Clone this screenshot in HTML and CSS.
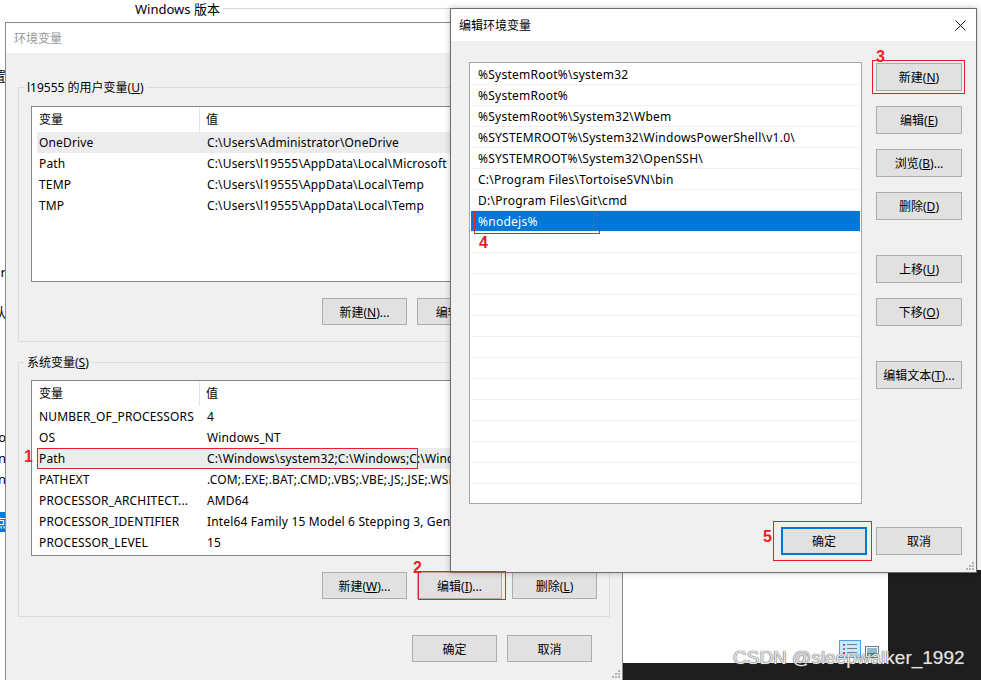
FILE: index.html
```html
<!DOCTYPE html>
<html lang="zh-CN">
<head>
    <meta charset="UTF-8">
    <meta name="viewport" content="width=device-width, initial-scale=1.0">
    <title>编辑环境变量</title>
    <link rel="stylesheet" href="styles.css">
</head>
<body>
    <div class="desktop">
        <div class="back-top">
            <span>Windows 版本</span>
            <div class="back-rule"></div>
        </div>

        <div class="back-left">
            <div class="bl-inner">
                <div class="bl-item bl-1">设置</div>
                <div class="bl-item bl-2">Jar</div>
                <div class="bl-item bl-3">认</div>
                <div class="bl-item bl-4">Pro</div>
                <div class="bl-item bl-5">Min</div>
                <div class="bl-item bl-5">Min</div>
                <div class="bl-item bl-6"><span class="bl-blue">点</span></div>
            </div>
        </div>

        <div class="back-app">
            <div class="back-sheet">
                <svg class="view-icon" width="22" height="18" viewBox="0 0 22 18">
                    <rect x="0.5" y="0.5" width="21" height="17" fill="#cce8ff" stroke="#4aa3e8"/>
                    <rect x="4" y="4" width="2" height="2" fill="#7a7a7a"/>
                    <rect x="8" y="4" width="10" height="1" fill="#7a7a7a"/>
                    <rect x="4" y="8" width="2" height="2" fill="#7a7a7a"/>
                    <rect x="8" y="8" width="10" height="1" fill="#7a7a7a"/>
                    <rect x="4" y="12" width="2" height="2" fill="#d04040"/>
                    <rect x="8" y="12" width="10" height="1" fill="#7a7a7a"/>
                </svg>
                <svg class="view-icon" width="14" height="12" viewBox="0 0 14 12">
                    <rect x="0.5" y="0.5" width="13" height="11" fill="#fff" stroke="#7a7a7a"/>
                    <rect x="2" y="2" width="10" height="5" fill="#8fb7d8"/>
                    <rect x="2" y="7" width="10" height="3" fill="#5b8a5a"/>
                </svg>
            </div>
        </div>

        <!-- 环境变量 -->
        <div class="window env-window">
            <div class="titlebar inactive"><span>环境变量</span></div>
            <div class="dialog-body env-body">
                <div class="group">
                    <div class="group-title">l19555 的用户变量(<u>U</u>)</div>
                    <div class="listview user-list">
                        <div class="lv-head"><span class="col-name">变量</span><span class="col-value">值</span></div>
                        <div class="lv-row hot"><span class="col-name">OneDrive</span><span class="col-value">C:\Users\Administrator\OneDrive</span></div>
                        <div class="lv-row"><span class="col-name">Path</span><span class="col-value">C:\Users\l19555\AppData\Local\Microsoft</span></div>
                        <div class="lv-row"><span class="col-name">TEMP</span><span class="col-value">C:\Users\l19555\AppData\Local\Temp</span></div>
                        <div class="lv-row"><span class="col-name">TMP</span><span class="col-value">C:\Users\l19555\AppData\Local\Temp</span></div>
                    </div>
                    <div class="btn-row">
                        <button class="btn">新建(<u>N</u>)...</button>
                        <button class="btn">编辑(<u>E</u>)...</button>
                        <button class="btn">删除(<u>D</u>)</button>
                    </div>
                </div>

                <div class="group sys-group">
                    <div class="group-title">系统变量(<u>S</u>)</div>
                    <div class="listview sys-list">
                        <div class="lv-head"><span class="col-name">变量</span><span class="col-value">值</span></div>
                        <div class="lv-row"><span class="col-name">NUMBER_OF_PROCESSORS</span><span class="col-value">4</span></div>
                        <div class="lv-row"><span class="col-name">OS</span><span class="col-value">Windows_NT</span></div>
                        <div class="lv-row hot"><span class="col-name">Path</span><span class="col-value">C:\Windows\system32;C:\Windows;C:\Windows\System32\Wbem;</span></div>
                        <div class="lv-row"><span class="col-name">PATHEXT</span><span class="col-value">.COM;.EXE;.BAT;.CMD;.VBS;.VBE;.JS;.JSE;.WSF;.WSH;.MSC</span></div>
                        <div class="lv-row"><span class="col-name">PROCESSOR_ARCHITECT...</span><span class="col-value">AMD64</span></div>
                        <div class="lv-row"><span class="col-name">PROCESSOR_IDENTIFIER</span><span class="col-value">Intel64 Family 15 Model 6 Stepping 3, GenuineIntel</span></div>
                        <div class="lv-row"><span class="col-name">PROCESSOR_LEVEL</span><span class="col-value">15</span></div>
                    </div>
                    <div class="btn-row sys-buttons">
                        <button class="btn">新建(<u>W</u>)...</button>
                        <button class="btn">编辑(<u>I</u>)...</button>
                        <button class="btn">删除(<u>L</u>)</button>
                    </div>
                </div>

                <div class="btn-row env-actions">
                    <button class="btn">确定</button>
                    <button class="btn">取消</button>
                </div>
            </div>
            <svg class="grip" width="8" height="8" viewBox="0 0 8 8">
                <rect x="6" y="0" width="2" height="2"/>
                <rect x="3" y="3" width="2" height="2"/><rect x="6" y="3" width="2" height="2"/>
                <rect x="0" y="6" width="2" height="2"/><rect x="3" y="6" width="2" height="2"/><rect x="6" y="6" width="2" height="2"/>
            </svg>
        </div>

        <!-- 编辑环境变量 -->
        <div class="window edit-window">
            <div class="titlebar">
                <span>编辑环境变量</span>
                <svg class="close" width="11" height="11" viewBox="0 0 11 11">
                    <path d="M0.5 0.5L10.5 10.5M10.5 0.5L0.5 10.5" stroke="#111" stroke-width="1"/>
                </svg>
            </div>
            <div class="dialog-body edit-body">
                <div class="edit-main">
                    <div class="path-list">
                        <div class="path-item">%SystemRoot%\system32</div>
                        <div class="path-item">%SystemRoot%</div>
                        <div class="path-item">%SystemRoot%\System32\Wbem</div>
                        <div class="path-item">%SYSTEMROOT%\System32\WindowsPowerShell\v1.0\</div>
                        <div class="path-item">%SYSTEMROOT%\System32\OpenSSH\</div>
                        <div class="path-item">C:\Program Files\TortoiseSVN\bin</div>
                        <div class="path-item">D:\Program Files\Git\cmd</div>
                        <div class="path-item selected">%nodejs%</div>
                        <div class="path-item"></div>
                        <div class="path-item"></div>
                        <div class="path-item"></div>
                        <div class="path-item"></div>
                        <div class="path-item"></div>
                        <div class="path-item"></div>
                        <div class="path-item"></div>
                        <div class="path-item"></div>
                        <div class="path-item"></div>
                        <div class="path-item"></div>
                        <div class="path-item"></div>
                        <div class="path-item"></div>
                        <div class="path-item"></div>
                    </div>
                    <div class="side-buttons">
                        <button class="btn tall">新建(<u>N</u>)</button>
                        <button class="btn tall">编辑(<u>E</u>)</button>
                        <button class="btn tall">浏览(<u>B</u>)...</button>
                        <button class="btn tall">删除(<u>D</u>)</button>
                        <button class="btn tall spaced">上移(<u>U</u>)</button>
                        <button class="btn tall">下移(<u>O</u>)</button>
                        <button class="btn tall spaced">编辑文本(<u>T</u>)...</button>
                    </div>
                </div>
                <div class="btn-row edit-actions">
                    <button class="btn tall default">确定</button>
                    <button class="btn tall">取消</button>
                </div>
            </div>
            <svg class="grip" width="8" height="8" viewBox="0 0 8 8">
                <rect x="6" y="0" width="2" height="2"/>
                <rect x="3" y="3" width="2" height="2"/><rect x="6" y="3" width="2" height="2"/>
                <rect x="0" y="6" width="2" height="2"/><rect x="3" y="6" width="2" height="2"/><rect x="6" y="6" width="2" height="2"/>
            </svg>
        </div>

        <!-- red marks -->
        <div class="mark box-1"></div><div class="mark-num num-1">1</div>
        <div class="mark box-2"></div><div class="mark-num num-2">2</div>
        <div class="mark box-3"></div><div class="mark-num num-3">3</div>
        <div class="mark box-4"></div><div class="mark-num num-4">4</div>
        <div class="mark box-5"></div><div class="mark-num num-5">5</div>

        <div class="watermark">CSDN @sleepwalker_1992</div>
    </div>
</body>
</html>
```

FILE: styles.css
```css
* {
    box-sizing: border-box;
}
body {
    margin: 0;
    font-family: "Noto Sans", "Noto Sans CJK SC", sans-serif;
    font-size: 12px;
    color: #000;
    background: #fff;
}
u {
    text-underline-offset: 1px;
}
.desktop {
    position: relative;
    width: 981px;
    height: 680px;
    overflow: hidden;
    background: #fff;
}

/* things behind the dialogs */
.back-top {
    position: absolute;
    left: 135px;
    top: 0;
    width: 316px;
    height: 17px;
    display: flex;
    align-items: center;
    font-size: 13px;
}
.back-rule {
    flex: 1;
    margin-left: 3px;
    border-top: 1px solid #d6d6d6;
}
.back-left {
    position: absolute;
    left: 0;
    top: 0;
    width: 6px;
    height: 680px;
    overflow: hidden;
}
.bl-inner {
    width: 40px;
    margin-left: -34px;
}
.bl-item {
    height: 16px;
    line-height: 16px;
    text-align: right;
    white-space: nowrap;
    font-size: 13px;
}
.bl-1 { margin-top: 68px; }
.bl-2 { margin-top: 180px; }
.bl-3 { margin-top: 24px; }
.bl-4 { margin-top: 109px; }
.bl-5 { margin-top: 5px; }
.bl-6 { margin-top: 27px; }
.bl-blue {
    background: #0078d7;
    color: #fff;
    padding: 1px 0 1px 3px;
}
.back-app {
    position: absolute;
    left: 622px;
    top: 570px;
    right: 0;
    bottom: 0;
    background: #1e1e1e;
}
.back-sheet {
    width: 266px;
    height: 93px;
    background: #fff;
    display: flex;
    justify-content: flex-end;
    align-items: flex-end;
    gap: 4px;
    padding: 0 9px 5px 0;
}

/* windows */
.window {
    position: absolute;
    display: flex;
    flex-direction: column;
    background: #f0f0f0;
}
.env-window {
    left: 5px;
    top: 22px;
    width: 618px;
    height: 659px;
    border: 1px solid #8a8a8a;
}
.edit-window {
    left: 450px;
    top: 8px;
    width: 527px;
    height: 565px;
    border: 1px solid #6e6e6e;
    box-shadow: 0 0 6px rgba(0, 0, 0, 0.25);
}
.titlebar {
    background: #fff;
    height: 32px;
    padding: 0 10px 0 8px;
    display: flex;
    align-items: center;
    justify-content: space-between;
}
.titlebar.inactive {
    height: 30px;
    color: #999;
}
.dialog-body {
    flex: 1;
    background: #f0f0f0;
}
.grip {
    position: absolute;
    right: 2px;
    bottom: 2px;
    fill: #b4b4b4;
}

/* 环境变量 */
.env-body {
    padding: 34px 12px 0 12px;
}
.group {
    border: 1px solid #dcdcdc;
    padding: 0 12px 16px 12px;
}
.sys-group {
    margin-top: 20px;
    padding-bottom: 17px;
}
.group-title {
    width: fit-content;
    margin: -8px 0 0 -7px;
    padding: 0 3px;
    line-height: 16px;
    background: #f0f0f0;
}
.listview {
    margin-top: 10px;
    background: #fff;
    border: 1px solid #828790;
    overflow: hidden;
}
.user-list {
    height: 176px;
}
.sys-list {
    margin-top: 9px;
    height: 176px;
}
.lv-head {
    display: flex;
    height: 25px;
    line-height: 25px;
}
.lv-head .col-name {
    width: 168px;
    padding-left: 7px;
    border-right: 1px solid #e5e5e5;
}
.lv-head .col-value {
    padding-left: 6px;
}
.lv-row {
    display: flex;
    height: 21px;
    line-height: 21px;
    margin-left: 5px;
    white-space: nowrap;
    letter-spacing: 0.15px;
}
.lv-row.hot {
    background: #ececec;
}
.lv-row .col-name {
    width: 168px;
    flex-shrink: 0;
    padding-left: 2px;
    overflow: hidden;
}
.lv-row .col-value {
    padding-left: 2px;
}
.btn-row {
    display: flex;
    justify-content: flex-end;
    gap: 10px;
    margin-top: 16px;
}
.sys-buttons {
    margin-top: 16px;
}
.env-actions {
    margin: 18px 18px 0 0;
}
.btn {
    width: 85px;
    height: 27px;
    padding: 0;
    background: #e1e1e1;
    border: 1px solid #adadad;
    font-family: inherit;
    font-size: 12px;
    color: #000;
}
.btn.tall {
    width: 86px;
    height: 28px;
}
.btn.default {
    border: 2px solid #0078d7;
}

/* 编辑环境变量 */
.edit-body {
    padding: 21px 14px 0 18px;
}
.edit-main {
    display: flex;
    gap: 14px;
}
.path-list {
    width: 393px;
    height: 442px;
    padding: 1px 1px 0 1px;
    background: #fff;
    border: 1px solid #a5a5a5;
    overflow: hidden;
}
.path-item {
    height: 21px;
    line-height: 21px;
    padding-left: 7px;
    border-bottom: 1px solid #f0f0f0;
    white-space: nowrap;
    letter-spacing: 0.25px;
}
.path-item.selected {
    background: #0078d7;
    color: #fff;
}
.side-buttons {
    display: flex;
    flex-direction: column;
    gap: 15px;
    padding-top: 1px;
}
.side-buttons .spaced {
    margin-top: 20px;
}
.edit-actions {
    gap: 9px;
    margin-top: 23px;
}

/* red annotations */
.mark {
    position: absolute;
    border: 1px solid #e8202a;
}
.mark-num {
    position: absolute;
    font-family: "Liberation Sans", sans-serif;
    font-weight: bold;
    font-size: 16px;
    line-height: 16px;
    color: #ee1d27;
}
.box-1 { left: 37px; top: 448px; width: 381px; height: 21px; }
.num-1 { left: 24px; top: 449px; }
.box-2 { left: 418px; top: 571px; width: 88px; height: 29px; }
.num-2 { left: 413px; top: 560px; }
.box-3 { left: 872px; top: 60px; width: 93px; height: 34px; }
.num-3 { left: 876px; top: 49px; }
.box-4 { left: 474px; top: 211px; width: 126px; height: 23px; }
.num-4 { left: 479px; top: 235px; }
.box-5 { left: 773px; top: 521px; width: 99px; height: 40px; }
.num-5 { left: 763px; top: 529px; }

.watermark {
    position: absolute;
    left: 733px;
    top: 647px;
    font-family: "Liberation Sans", sans-serif;
    font-size: 19px;
    line-height: 22px;
    color: #e4e4e4;
    text-shadow: 0 0 1px #555, 0 0 1px #555;
    white-space: nowrap;
}
```
